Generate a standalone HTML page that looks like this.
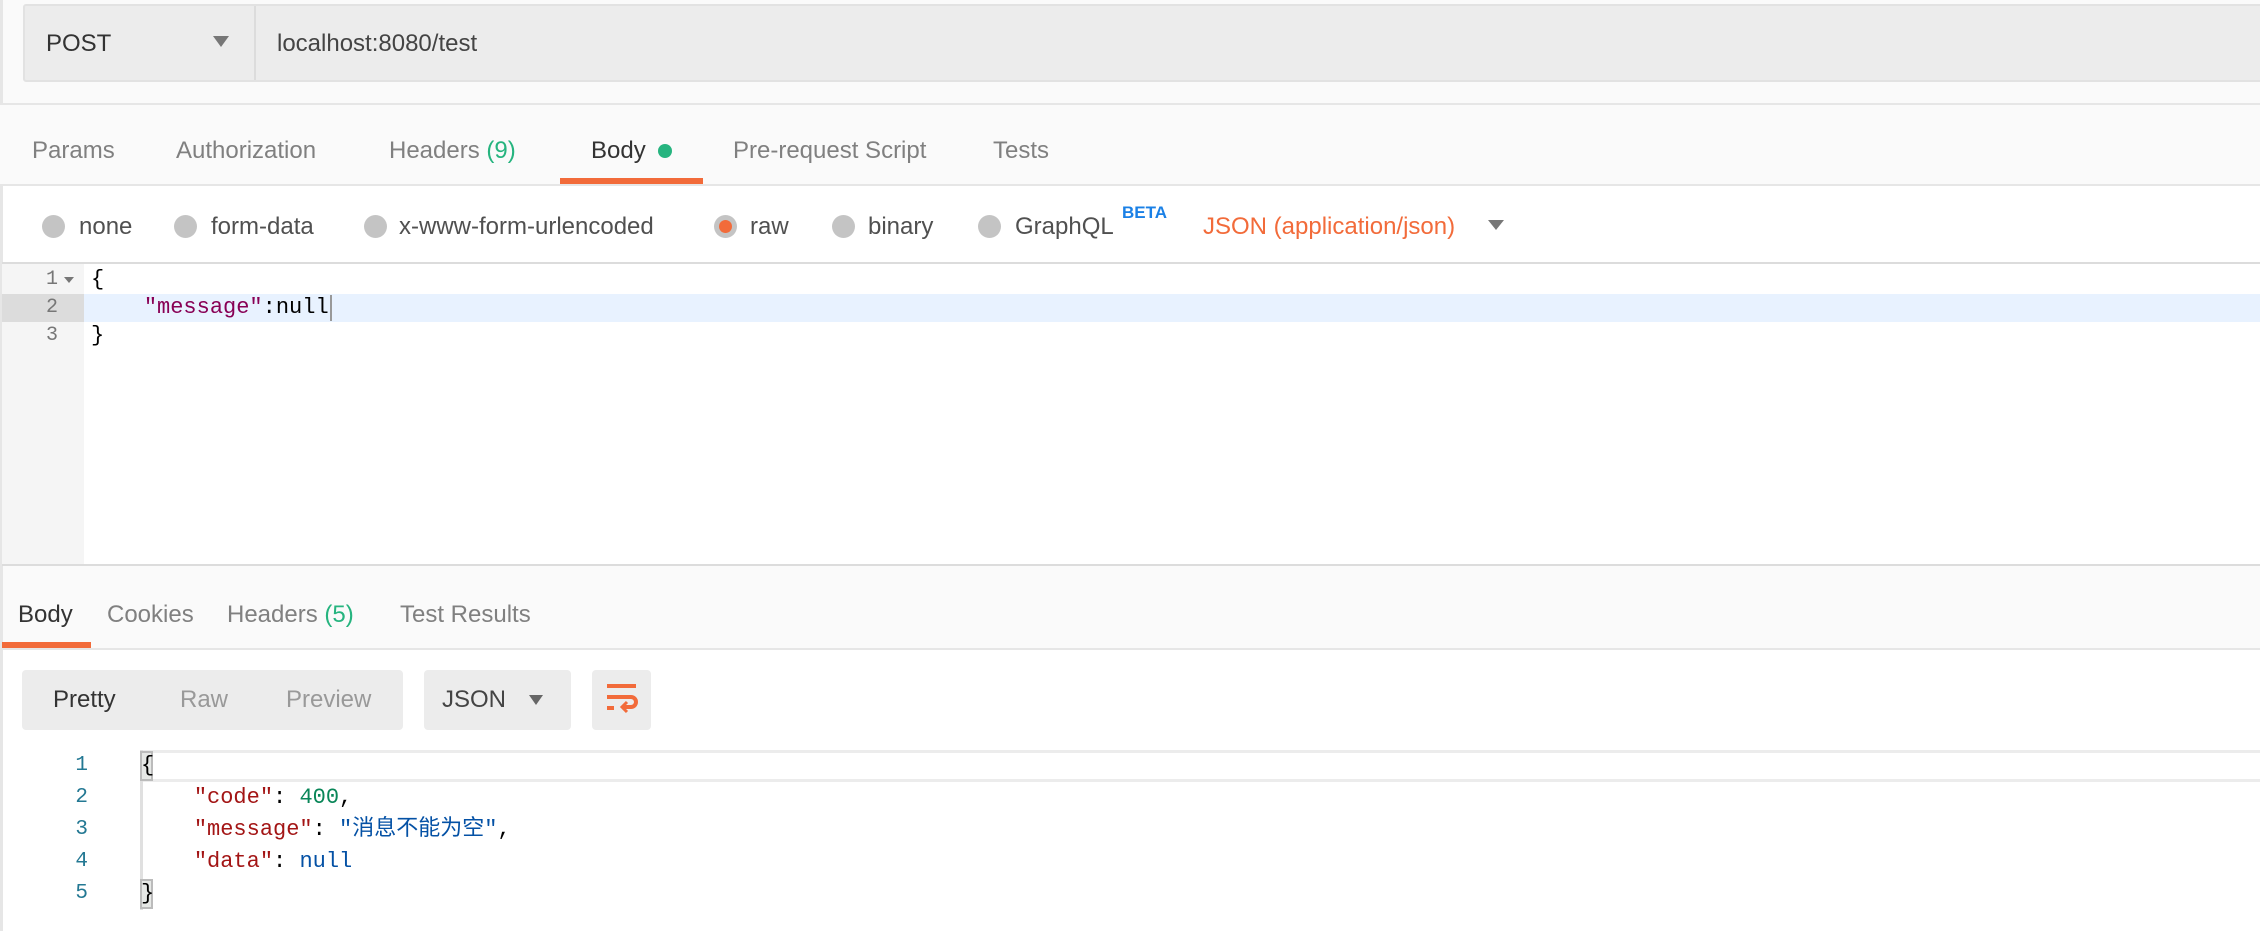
<!DOCTYPE html>
<html><head><meta charset="utf-8"><style>
*{margin:0;padding:0;box-sizing:border-box}
body{width:2260px;height:931px;overflow:hidden;background:#fff;font-family:"Liberation Sans","Noto Sans CJK SC",sans-serif;position:relative;color:#505050}
.a{position:absolute;white-space:nowrap}
.t{font-size:24px;line-height:30px;color:#808080}
.mono{font-family:"Liberation Mono","Noto Sans CJK SC",monospace}
.rad{position:absolute;width:23px;height:23px;border-radius:50%;background:#c4c4c4;top:215px}
</style></head><body>
<div class="a" style="left:0;top:0;width:2260px;height:104px;background:#fafafa"></div>
<div class="a" style="left:0;top:0;width:3px;height:931px;background:#e6e6e6"></div>
<div class="a" style="left:23px;top:4px;width:2240px;height:78px;background:#ececec;border:2px solid #e2e2e2;border-radius:3px"></div>
<div class="a" style="left:254px;top:6px;width:2px;height:74px;background:#dcdcdc"></div>
<div class="a" style="left:46px;top:29px;font-size:24px;line-height:30px;color:#333">POST</div>
<div class="a" style="left:213px;top:36px;width:0;height:0;border-left:8px solid transparent;border-right:8px solid transparent;border-top:11px solid #777"></div>
<div class="a" style="left:277px;top:29px;font-size:24px;line-height:30px;color:#444">localhost:8080/test</div>
<div class="a" style="left:0;top:103px;width:2260px;height:2px;background:#e6e6e6"></div>
<div class="a" style="left:0;top:105px;width:2260px;height:80px;background:#fafafa"></div>
<div class="a t" style="left:32px;top:136px">Params</div>
<div class="a t" style="left:176px;top:136px">Authorization</div>
<div class="a t" style="left:389px;top:136px">Headers <span style="color:#26b47f">(9)</span></div>
<div class="a t" style="left:591px;top:136px;color:#333">Body</div>
<div class="a" style="left:658px;top:144px;width:14px;height:14px;border-radius:50%;background:#26b47f"></div>
<div class="a t" style="left:733px;top:136px">Pre-request Script</div>
<div class="a t" style="left:993px;top:136px">Tests</div>
<div class="a" style="left:560px;top:178px;width:143px;height:6px;background:#f26b3a"></div>
<div class="a" style="left:0;top:184px;width:2260px;height:2px;background:#e6e6e6"></div>
<div class="rad" style="left:42px"></div><div class="a t" style="left:79px;top:212px;color:#505050">none</div>
<div class="rad" style="left:174px"></div><div class="a t" style="left:211px;top:212px;color:#505050">form-data</div>
<div class="rad" style="left:364px"></div><div class="a t" style="left:399px;top:212px;color:#505050">x-www-form-urlencoded</div>
<div class="rad" style="left:714px;background:#c4c4c4"></div><div class="a" style="left:719px;top:220px;width:13px;height:13px;border-radius:50%;background:#f26b3a"></div>
<div class="a t" style="left:750px;top:212px;color:#505050">raw</div>
<div class="rad" style="left:832px"></div><div class="a t" style="left:868px;top:212px;color:#505050">binary</div>
<div class="rad" style="left:978px"></div><div class="a t" style="left:1015px;top:212px;color:#505050">GraphQL</div>
<div class="a" style="left:1122px;top:203px;font-size:17px;font-weight:bold;color:#1a80e6">BETA</div>
<div class="a t" style="left:1203px;top:212px;color:#f26b3a">JSON (application/json)</div>
<div class="a" style="left:1488px;top:220px;width:0;height:0;border-left:8px solid transparent;border-right:8px solid transparent;border-top:10px solid #777"></div>
<div class="a" style="left:2px;top:262px;width:2260px;height:2px;background:#dcdcdc"></div>
<div class="a" style="left:2px;top:264px;width:82px;height:300px;background:#f5f5f5"></div>
<div class="a" style="left:84px;top:294px;width:2180px;height:28px;background:#e8f2ff"></div>
<div class="a" style="left:2px;top:294px;width:82px;height:28px;background:#dcdcdc"></div>
<div class="a mono" style="left:2px;top:266px;width:56px;text-align:right;font-size:20px;line-height:28px;color:#777">1<br>2<br>3</div>
<div class="a" style="left:64px;top:277px;width:0;height:0;border-left:5px solid transparent;border-right:5px solid transparent;border-top:6px solid #777"></div>
<div class="a mono" style="left:91px;top:266px;font-size:22px;line-height:28px;color:#000;white-space:pre">{
    <span style="color:#880055">"message"</span>:null</div>
<div class="a mono" style="left:91px;top:322px;font-size:22px;line-height:28px;color:#000">}</div>
<div class="a" style="left:330px;top:295px;width:2px;height:26px;background:#999"></div>
<div class="a" style="left:2px;top:564px;width:2260px;height:2px;background:#dcdcdc"></div>
<div class="a" style="left:3px;top:566px;width:2260px;height:83px;background:#fafafa"></div>
<div class="a t" style="left:18px;top:600px;color:#333">Body</div>
<div class="a t" style="left:107px;top:600px">Cookies</div>
<div class="a t" style="left:227px;top:600px">Headers <span style="color:#26b47f">(5)</span></div>
<div class="a t" style="left:400px;top:600px">Test Results</div>
<div class="a" style="left:2px;top:642px;width:89px;height:6px;background:#f26b3a"></div>
<div class="a" style="left:0;top:648px;width:2260px;height:2px;background:#e6e6e6"></div>
<div class="a" style="left:22px;top:670px;width:381px;height:60px;background:#ececec;border-radius:4px"></div>
<div class="a t" style="left:53px;top:685px;color:#333">Pretty</div>
<div class="a t" style="left:180px;top:685px;color:#999">Raw</div>
<div class="a t" style="left:286px;top:685px;color:#999">Preview</div>
<div class="a" style="left:424px;top:670px;width:147px;height:60px;background:#ececec;border-radius:4px"></div>
<div class="a t" style="left:442px;top:685px;color:#444">JSON</div>
<div class="a" style="left:529px;top:695px;width:0;height:0;border-left:7px solid transparent;border-right:7px solid transparent;border-top:10px solid #666"></div>
<div class="a" style="left:592px;top:670px;width:59px;height:60px;background:#ececec;border-radius:4px"></div>
<svg class="a" style="left:604px;top:682px" width="36" height="36" viewBox="0 0 36 36" fill="none" stroke="#f26b3a" stroke-width="4">
<path d="M3 4H32"/><path d="M3 15H27a5 5 0 0 1 0 10H19"/><path d="M23 20l-5 5 5 5" stroke-width="3"/><path d="M3 26H10"/></svg>
<div class="a" style="left:140px;top:750px;width:2120px;height:32px;background:#fff;border-top:3px solid #ececec;border-bottom:3px solid #ececec"></div>
<div class="a" style="left:140px;top:750px;width:3px;height:160px;background:#e0e0e0"></div>
<div class="a" style="left:140px;top:751px;width:13px;height:30px;background:#e6e8e6;border:2px solid #bbb"></div>
<div class="a" style="left:140px;top:879px;width:13px;height:30px;background:#e6e8e6;border:2px solid #bbb"></div>
<div class="a mono" style="left:56px;top:750px;width:32px;text-align:right;font-size:21px;line-height:32px;color:#237893">1<br>2<br>3<br>4<br>5</div>
<div class="a mono" style="left:141px;top:750px;font-size:22px;line-height:32px;color:#000;white-space:pre">{
    <span style="color:#a31515">"code"</span>: <span style="color:#098658">400</span>,
    <span style="color:#a31515">"message"</span>: <span style="color:#0451a5">"消息不能为空"</span>,
    <span style="color:#a31515">"data"</span>: <span style="color:#0451a5">null</span>
}</div>
</body></html>
